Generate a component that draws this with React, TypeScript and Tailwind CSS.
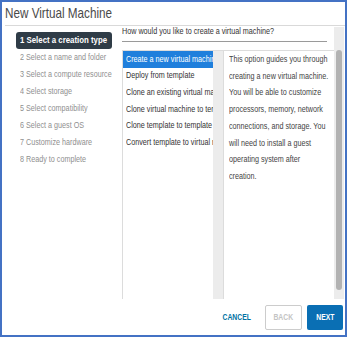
import React from 'react';

const steps = [
  '1 Select a creation type',
  '2 Select a name and folder',
  '3 Select a compute resource',
  '4 Select storage',
  '5 Select compatibility',
  '6 Select a guest OS',
  '7 Customize hardware',
  '8 Ready to complete',
];

const creationTypes = [
  'Create a new virtual machine',
  'Deploy from template',
  'Clone an existing virtual machine',
  'Clone virtual machine to template',
  'Clone template to template',
  'Convert template to virtual machine',
];

const descLines = [
  'This option guides you through',
  'creating a new virtual machine.',
  'You will be able to customize',
  'processors, memory, network',
  'connections, and storage. You',
  'will need to install a guest',
  'operating system after',
  'creation.',
];

// the source font is a narrow one, so squeeze the text horizontally
const Narrow = ({ children }: { children: React.ReactNode }) => (
  <span className="inline-block origin-left scale-x-[0.8] whitespace-nowrap">{children}</span>
);

export default function App() {
  return (
    <div
      className="flex h-[337px] w-[347px] flex-col border-2 border-[#4472c4] bg-white text-[#333]"
      style={{ fontFamily: '"Liberation Sans", Arial, sans-serif' }}
    >
      {/* header */}
      <div className="flex h-[23px] items-center pl-[3px] text-[15px] text-[#4a4a4a]">
        <span className="inline-block origin-left scale-x-[0.78] whitespace-nowrap">New Virtual Machine</span>
      </div>
      <div className="ml-[3px] border-b border-[#d9d9d9]" />

      <div className="flex h-[273px]">
        {/* wizard steps */}
        <nav className="w-[120px] shrink-0 pl-[14px] pt-[6px]">
          {steps.map((step, i) => (
            <div
              key={step}
              className={
                i === 0
                  ? 'flex h-[17px] w-[96px] items-center overflow-hidden rounded-[3px] bg-[#2f3c47] pl-[4px] text-[9.8px] font-bold text-white'
                  : 'flex h-[17px] w-[96px] items-center overflow-hidden pl-[4px] text-[9px] text-[#8f8f8f]'
              }
            >
              <Narrow>{step}</Narrow>
            </div>
          ))}
        </nav>

        {/* main */}
        <div className="flex min-w-0 flex-1">
          <div className="flex min-w-0 flex-1 flex-col">
            <div className="mr-[7px] h-[16px] overflow-hidden border-b border-[#9a9a9a] text-[9px] leading-[11px] text-[#333]">
              <Narrow>How would you like to create a virtual machine?</Narrow>
            </div>
            <div className="mt-[8px] flex min-w-0 flex-1">
              <div className="flex w-[101px] shrink-0 border-t border-l border-[#dcdcdc]">
                <ul className="w-[90px] overflow-hidden">
                  {creationTypes.map((t, i) => (
                    <li
                      key={t}
                      className={
                        i === 0
                          ? 'flex h-[16.7px] items-center overflow-hidden bg-[#1f7fdc] pl-[3px] text-[9px] text-white'
                          : 'flex h-[16.7px] items-center overflow-hidden pl-[3px] text-[9px] text-[#333]'
                      }
                    >
                      <Narrow>{t}</Narrow>
                    </li>
                  ))}
                </ul>
                <div className="w-[10px] bg-[#ececec]" />
              </div>
              <div className="min-w-0 flex-1 overflow-hidden border-t border-l border-[#dcdcdc] pl-[5px] text-[9px] leading-[16.7px] text-[#444]">
                {descLines.map((l) => (
                  <div key={l}>
                    <Narrow>{l}</Narrow>
                  </div>
                ))}
              </div>
            </div>
          </div>
          {/* page scrollbar */}
          <div className="mr-[1px] mt-[1px] flex w-[10px] shrink-0 justify-center bg-[#ececec] pt-[23px] pb-[9px]">
            <div className="w-[6px] rounded-full bg-[#b2b2b2]" />
          </div>
        </div>
      </div>

      {/* footer */}
      <div className="flex flex-1 items-center justify-end pr-[2px] pt-[1px]">
        <button
          type="button"
          className="mr-[14px] flex w-[28px] justify-center text-[8.5px] font-bold text-[#0072a3]"
        >
          <span className="inline-block scale-x-[0.8]">CANCEL</span>
        </button>
        <button
          type="button"
          className="mr-[5px] flex h-[25px] w-[37px] items-center justify-center rounded-[2px] border border-[#cccccc] text-[8.5px] font-bold text-[#c4c4c4]"
        >
          <span className="inline-block scale-x-[0.8]">BACK</span>
        </button>
        <button
          type="button"
          className="flex h-[25px] w-[36px] items-center justify-center rounded-[2px] bg-[#0a6fb4] text-[8.5px] font-bold text-white"
        >
          <span className="inline-block scale-x-[0.8]">NEXT</span>
        </button>
      </div>
    </div>
  );
}
